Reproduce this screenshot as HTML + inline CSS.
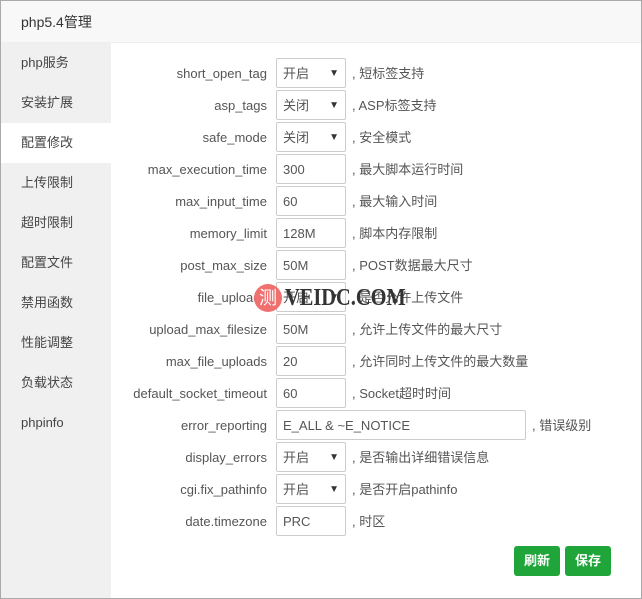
<!DOCTYPE html>
<html><head><meta charset="utf-8"><style>
*{box-sizing:border-box;margin:0;padding:0}
body{width:642px;height:599px;background:#fff;font-family:"Liberation Sans","Noto Sans CJK SC",sans-serif;font-size:13px;color:#333;position:relative;overflow:hidden}
.frame{position:absolute;left:0;top:0;width:642px;height:599px;border:1px solid #aaa}
.title{position:absolute;left:1px;top:1px;width:640px;height:42px;background:#f8f8f8;border-bottom:1px solid #eee;font-size:14px;line-height:42px;padding-left:20px;color:#333}
.side{position:absolute;left:1px;top:43px;width:110px;height:555px;background:#f0f0f0}
.side div{height:40px;line-height:40px;padding-left:20px;font-size:13px;color:#444}
.side .on{background:#fff}
.row{position:absolute;left:111px;height:30px;width:530px}
.lab{position:absolute;right:374px;top:1px;line-height:30px;white-space:nowrap;color:#555}
.inp{position:absolute;left:165px;top:0;width:70px;height:30px;border:1px solid #ccc;border-radius:2px;line-height:30px;padding-left:6px;color:#555}
.inp.sel:after{content:"▼";position:absolute;right:6px;top:0;font-size:10px;color:#333}
.note{position:absolute;left:241px;top:1px;line-height:30px;white-space:nowrap;color:#555}
.btn{position:absolute;top:546px;height:30px;width:46px;background:#20a53a;color:#fff;border-radius:3px;text-align:center;line-height:30px;font-size:13px;font-weight:bold}
</style></head><body>
<div class="frame"></div>
<div class="title">php5.4管理</div>
<div class="side">
<div>php服务</div><div>安装扩展</div><div class="on">配置修改</div><div>上传限制</div><div>超时限制</div><div>配置文件</div><div>禁用函数</div><div>性能调整</div><div>负载状态</div><div>phpinfo</div>
</div>
<div class="row" style="top:58px"><span class="lab">short_open_tag</span><div class="inp sel">开启</div><span class="note">, 短标签支持</span></div>
<div class="row" style="top:90px"><span class="lab">asp_tags</span><div class="inp sel">关闭</div><span class="note">, ASP标签支持</span></div>
<div class="row" style="top:122px"><span class="lab">safe_mode</span><div class="inp sel">关闭</div><span class="note">, 安全模式</span></div>
<div class="row" style="top:154px"><span class="lab">max_execution_time</span><div class="inp">300</div><span class="note">, 最大脚本运行时间</span></div>
<div class="row" style="top:186px"><span class="lab">max_input_time</span><div class="inp">60</div><span class="note">, 最大输入时间</span></div>
<div class="row" style="top:218px"><span class="lab">memory_limit</span><div class="inp">128M</div><span class="note">, 脚本内存限制</span></div>
<div class="row" style="top:250px"><span class="lab">post_max_size</span><div class="inp">50M</div><span class="note">, POST数据最大尺寸</span></div>
<div class="row" style="top:282px"><span class="lab">file_uploads</span><div class="inp sel">开启</div><span class="note">, 是否允许上传文件</span></div>
<div class="row" style="top:314px"><span class="lab">upload_max_filesize</span><div class="inp">50M</div><span class="note">, 允许上传文件的最大尺寸</span></div>
<div class="row" style="top:346px"><span class="lab">max_file_uploads</span><div class="inp">20</div><span class="note">, 允许同时上传文件的最大数量</span></div>
<div class="row" style="top:378px"><span class="lab">default_socket_timeout</span><div class="inp">60</div><span class="note">, Socket超时时间</span></div>
<div class="row" style="top:410px"><span class="lab">error_reporting</span><div class="inp" style="width:250px">E_ALL &amp; ~E_NOTICE</div><span class="note" style="left:421px">, 错误级别</span></div>
<div class="row" style="top:442px"><span class="lab">display_errors</span><div class="inp sel">开启</div><span class="note">, 是否输出详细错误信息</span></div>
<div class="row" style="top:474px"><span class="lab">cgi.fix_pathinfo</span><div class="inp sel">开启</div><span class="note">, 是否开启pathinfo</span></div>
<div class="row" style="top:506px"><span class="lab">date.timezone</span><div class="inp">PRC</div><span class="note">, 时区</span></div>
<div style="position:absolute;left:254px;top:284px;width:28px;height:28px;border-radius:50%;background:#f07070;color:#fff;font-size:18px;line-height:28px;text-align:center">测</div>
<div style="position:absolute;left:285px;top:285px;font-family:'Liberation Serif',serif;font-weight:bold;font-size:24px;color:#333;transform:scaleX(0.85);transform-origin:left">VEIDC.COM</div>
<div class="btn" style="left:514px">刷新</div>
<div class="btn" style="left:565px">保存</div>
</body></html>
